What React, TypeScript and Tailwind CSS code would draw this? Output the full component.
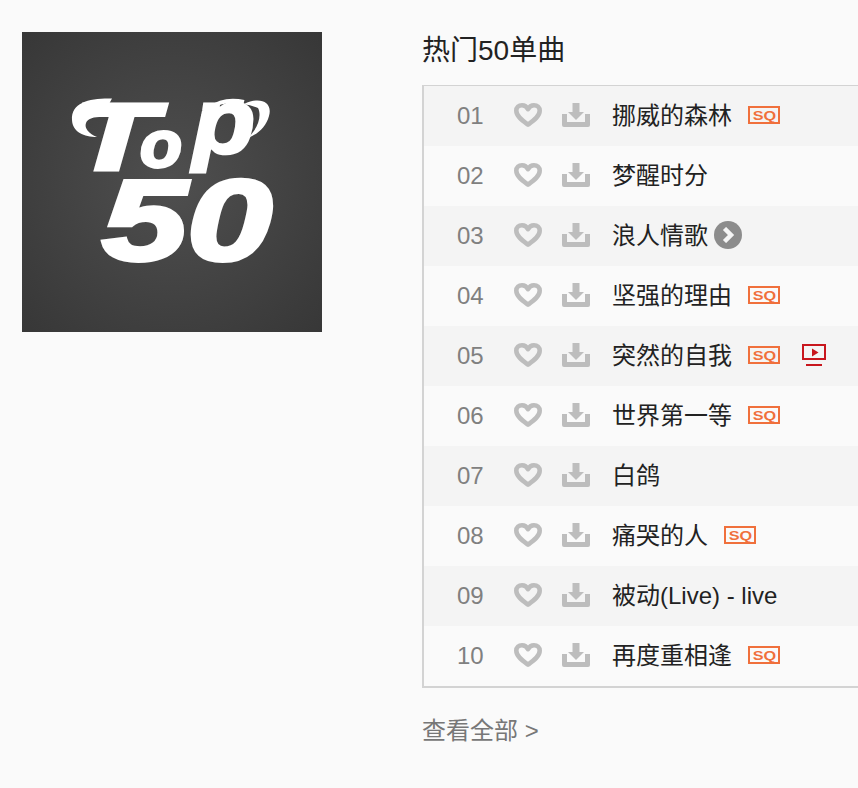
import React from 'react'

const songs = [
  { no: '01', title: '挪威的森林', sq: true },
  { no: '02', title: '梦醒时分' },
  { no: '03', title: '浪人情歌', more: true },
  { no: '04', title: '坚强的理由', sq: true },
  { no: '05', title: '突然的自我', sq: true, mv: true },
  { no: '06', title: '世界第一等', sq: true },
  { no: '07', title: '白鸽' },
  { no: '08', title: '痛哭的人', sq: true },
  { no: '09', title: '被动(Live) - live' },
  { no: '10', title: '再度重相逢', sq: true }
]

const HeartIcon = () => (
  <svg className="block" width="28" height="24" viewBox="0 0 28 24" fill="none">
    <path
      d="M14 21.600C9 18 2.300 13.500 2.300 7.800 2.300 4.400 4.800 2.300 8 2.300 10.600 2.300 12.800 3.800 14 6.200 15.200 3.800 17.400 2.300 20 2.300 23.200 2.300 25.700 4.400 25.700 7.800 25.700 13.500 19 18 14 21.600Z"
      stroke="#bdbdbd"
      strokeWidth="4.600"
      strokeLinejoin="round"
    />
  </svg>
)

const DownloadIcon = () => (
  <svg className="block" width="28" height="24" viewBox="0 0 28 24" fill="#bdbdbd">
    <path d="M10.500 0h7v9h4.500L14 17 6 9h4.500Z" />
    <path d="M0 11h5v8h18v-8h5v11a2 2 0 0 1-2 2H2a2 2 0 0 1-2-2Z" />
  </svg>
)

const SqBadge = () => (
  <span className="mb-0.5 ml-4 flex h-[18px] w-8 items-center justify-center border-2 border-[#f0703c] font-['Liberation_Sans',sans-serif] text-[13px] leading-none font-bold text-[#f0703c]">
    <span className="inline-block scale-x-[1.25]">SQ</span>
  </span>
)

const MoreIcon = () => (
  <span className="mb-0.5 ml-1.5 flex h-7 w-7 items-center justify-center rounded-full bg-[#8c8c8c]">
    <svg width="14" height="16" viewBox="0 0 14 16" fill="none">
      <path d="M3.500 1.500 10 8l-6.500 6.500" stroke="#f5f5f5" strokeWidth="4.500" />
    </svg>
  </span>
)

const MvIcon = () => (
  <svg className="mb-0.5 ml-[22px]" width="24" height="22" viewBox="0 0 24 22" fill="none">
    <rect x="1" y="1" width="22" height="14" stroke="#c8161d" strokeWidth="2" />
    <path d="M10 4.500 16.500 8.500 10 12.500Z" fill="#c8161d" />
    <path d="M4 21h16" stroke="#c8161d" strokeWidth="2" />
  </svg>
)

const Cover = () => (
  <div className="h-[300px] w-[300px] shrink-0 bg-[radial-gradient(circle,#4f4f4f,#373737)]">
    <svg width="300" height="300" viewBox="0 0 300 300" fill="#fff">
      {/* swashes on the T and p of the logo */}
      <path d="M90 66.500C68 66 49 70 50 88 50.500 100 62 105 75 105 67 102 62 96 64 91 66 86 72 85 80 85Z" />
      <path d="M181 84C190 71 205 66 222 70" stroke="#fff" strokeWidth="4" fill="none" />
      <path d="M222 72C238 64 251 70 247 84 244 95 236 102 226 106 236 96 240 84 236 76 232 74 226 73 222 72Z" />
      <text fontFamily="Liberation Sans" fontWeight="700" fontStyle="italic" stroke="#fff">
        <tspan x="50" y="138" fontSize="95" strokeWidth="4" textLength="84" lengthAdjust="spacingAndGlyphs">
          T
        </tspan>
        <tspan x="118" y="135" fontSize="66" strokeWidth="3" textLength="42" lengthAdjust="spacingAndGlyphs">
          o
        </tspan>
        <tspan x="171" y="121" fontSize="92" strokeWidth="3" textLength="62" lengthAdjust="spacingAndGlyphs">
          p
        </tspan>
      </text>
      <text
        x="80"
        y="228"
        fontFamily="Liberation Sans"
        fontWeight="700"
        fontStyle="italic"
        fontSize="115"
        stroke="#fff"
        strokeWidth="4"
        textLength="170"
        lengthAdjust="spacingAndGlyphs"
      >
        50
      </text>
    </svg>
  </div>
)

const App = () => {
  return (
    <div className="flex h-[788px] w-full overflow-hidden bg-[#fafafa] pt-8 pl-[22px] font-['Liberation_Sans','Noto_Sans_CJK_SC',sans-serif] text-2xl">
      <Cover />
      <div className="ml-[100px] w-[436px] shrink-0">
        <h2 className="h-[53px] text-[28px] leading-[38px] text-[#222]">热门50单曲</h2>
        <div className="w-[500px] border-2 border-[#d3d3d3]">
          {songs.map((song, i) => (
            <div
              key={song.no}
              className={`flex h-[60px] items-center ${i % 2 === 0 ? 'bg-[#f4f4f4]' : 'bg-[#fafafa]'} ${i === 0 ? '-mt-px' : ''}`}
            >
              <span className="w-[90px] pl-[33px] text-[#808080]">{song.no}</span>
              <span className="mb-0.5 w-12">
                <HeartIcon />
              </span>
              <span className="mb-0.5 w-[50px]">
                <DownloadIcon />
              </span>
              <span className="text-[#222]">{song.title}</span>
              {song.sq && <SqBadge />}
              {song.more && <MoreIcon />}
              {song.mv && <MvIcon />}
            </div>
          ))}
        </div>
        <div className="mt-[25px] leading-9 text-[#777]">查看全部 &gt;</div>
      </div>
    </div>
  )
}

export default App
